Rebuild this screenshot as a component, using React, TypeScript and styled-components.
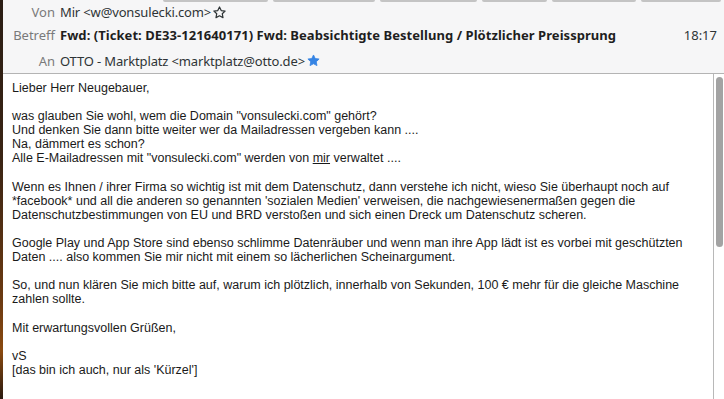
import styled, { createGlobalStyle } from 'styled-components';

const GlobalStyle = createGlobalStyle`
  html, body {
    margin: 0;
    padding: 0;
    height: 100%;
    overflow: hidden;
  }
  #root {
    height: 100%;
  }
`;

const Screen = styled.div`
  display: flex;
  width: 724px;
  height: 399px;
  overflow: hidden;
`;

const Wallpaper = styled.div`
  width: 3px;
  flex-shrink: 0;
  background: linear-gradient(180deg, #2a1d14 0%, #3a2414 40%, #6b3a12 75%, #8a4a10 88%, #2a1a10 100%);
`;

const Window = styled.div`
  flex: 1;
  display: flex;
  flex-direction: column;
  min-width: 0;
`;

const Header = styled.div`
  height: 73px;
  background: #f6f6f7;
  border-bottom: 1px solid #b4b4b4;
  display: flex;
  flex-direction: column;
  font-family: "Noto Sans", "Open Sans", sans-serif;
  font-size: 13px;
  color: #2e3436;
`;

const ButtonEdges = styled.div`
  display: flex;
  gap: 5px;
  height: 2px;
  padding-left: 160px;
`;

const ButtonEdge = styled.div<{ $w: number }>`
  width: ${p => p.$w}px;
  height: 2px;
  background: #c4c4c4;
  border-radius: 0 0 2px 2px;
`;

const Row = styled.div<{ $h: number }>`
  display: flex;
  align-items: center;
  height: ${p => p.$h}px;
  padding-right: 7px;
`;

const Label = styled.span`
  width: 52px;
  flex-shrink: 0;
  text-align: right;
  color: #7a7a7a;
  padding-right: 5px;
`;

const Value = styled.span<{ $bold?: boolean }>`
  font-weight: ${p => (p.$bold ? 700 : 400)};
  white-space: nowrap;
  color: ${p => (p.$bold ? '#1e1e1e' : '#2e3436')};
  display: flex;
  align-items: center;
  gap: 2px;
  letter-spacing: ${p => (p.$bold ? '0.05px' : '-0.15px')};
`;

const Time = styled.span`
  margin-left: auto;
  color: #2e3436;
`;

const Content = styled.div`
  flex: 1;
  display: flex;
  background: #ffffff;
  min-height: 0;
`;

const Body = styled.div`
  flex: 1;
  padding: 7px 9px 0 9px;
  font-family: "Liberation Sans", Arial, sans-serif;
  font-size: 12.5px;
  line-height: 14.1px;
  color: #1a1a1a;
`;

const Para = styled.p`
  margin: 0 0 14.1px 0;
`;

const Scrollbar = styled.div`
  width: 11px;
  flex-shrink: 0;
  border-left: 1px solid #b8b8b8;
  padding: 3px 1px 0 2px;
  box-sizing: border-box;
`;

const Thumb = styled.div`
  width: 7px;
  height: 170px;
  background: #a3a3a3;
  border-radius: 4px;
`;

function Star({ filled }: { filled?: boolean }) {
  return (
    <svg width="13" height="13" viewBox="0 0 16 16">
      <path
        d="M8 1.2l2.1 4.4 4.8.6-3.5 3.3.9 4.8L8 12l-4.3 2.3.9-4.8L1.1 6.2l4.8-.6z"
        fill={filled ? '#3584e4' : 'none'}
        stroke={filled ? '#3584e4' : '#2e3436'}
        strokeWidth={filled ? 1 : 1.5}
        strokeLinejoin="round"
      />
    </svg>
  );
}

const edges = [105, 102, 97, 65, 84, 80];

export default function App() {
  return (
    <>
      <GlobalStyle />
      <Screen>
        <Wallpaper />
        <Window>
          <Header>
            <ButtonEdges>
              {edges.map((w, i) => <ButtonEdge key={i} $w={w} />)}
            </ButtonEdges>
            <Row $h={20}>
              <Label>Von</Label>
              <Value>Mir &lt;w@vonsulecki.com&gt; <Star /></Value>
            </Row>
            <Row $h={26}>
              <Label>Betreff</Label>
              <Value $bold>Fwd: (Ticket: DE33-121640171) Fwd: Beabsichtigte Bestellung / Plötzlicher Preissprung</Value>
              <Time>18:17</Time>
            </Row>
            <Row $h={25}>
              <Label>An</Label>
              <Value>OTTO - Marktplatz &lt;marktplatz@otto.de&gt; <Star filled /></Value>
            </Row>
          </Header>
          <Content>
            <Body>
              <Para>Lieber Herr Neugebauer,</Para>
              <Para>
                was glauben Sie wohl, wem die Domain "vonsulecki.com" gehört?<br />
                Und denken Sie dann bitte weiter wer da Mailadressen vergeben kann ....<br />
                Na, dämmert es schon?<br />
                Alle E-Mailadressen mit "vonsulecki.com" werden von <u>mir</u> verwaltet ....
              </Para>
              <Para>
                Wenn es Ihnen / ihrer Firma so wichtig ist mit dem Datenschutz, dann verstehe ich nicht, wieso Sie überhaupt noch auf
                *facebook* und all die anderen so genannten 'sozialen Medien' verweisen, die nachgewiesenermaßen gegen die
                Datenschutzbestimmungen von EU und BRD verstoßen und sich einen Dreck um Datenschutz scheren.
              </Para>
              <Para>
                Google Play und App Store sind ebenso schlimme Datenräuber und wenn man ihre App lädt ist es vorbei mit geschützten
                Daten .... also kommen Sie mir nicht mit einem so lächerlichen Scheinargument.
              </Para>
              <Para>
                So, und nun klären Sie mich bitte auf, warum ich plötzlich, innerhalb von Sekunden, 100 € mehr für die gleiche Maschine
                zahlen sollte.
              </Para>
              <Para>Mit erwartungsvollen Grüßen,</Para>
              <Para>
                vS<br />
                [das bin ich auch, nur als 'Kürzel']
              </Para>
            </Body>
            <Scrollbar>
              <Thumb />
            </Scrollbar>
          </Content>
        </Window>
      </Screen>
    </>
  );
}
